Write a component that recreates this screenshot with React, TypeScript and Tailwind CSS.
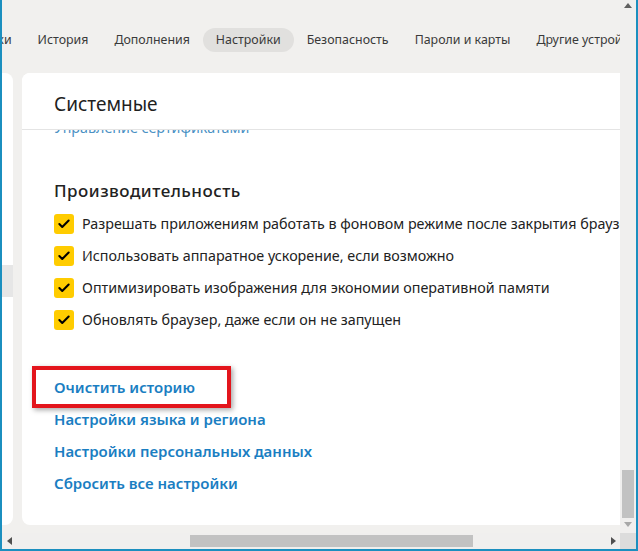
import { Check } from 'lucide-react'

const tabs = ["Закладки", "История", "Дополнения", "Настройки", "Безопасность", "Пароли и карты", "Другие устройства"]

const options = [
    "Разрешать приложениям работать в фоновом режиме после закрытия браузера",
    "Использовать аппаратное ускорение, если возможно",
    "Оптимизировать изображения для экономии оперативной памяти",
    "Обновлять браузер, даже если он не запущен",
]

const links = [
    "Очистить историю",
    "Настройки языка и региона",
    "Настройки персональных данных",
    "Сбросить все настройки",
]

export default function App() {
    return (
        <div className="w-[638px] h-[551px] flex flex-col bg-[#f1f0ee] border-x-2 border-b-2 border-[#1b8fbf] overflow-hidden font-['Noto_Sans',sans-serif]">
            <div className="flex h-[533px]">
                {/* Page area */}
                <div className="flex-1 flex flex-col min-w-0">
                    {/* Tabs */}
                    <div className="h-[73px] flex items-center overflow-hidden">
                        <div className="flex items-center -ml-[60px] pt-[6px] whitespace-nowrap">
                            {tabs.map((tab) => (
                                <div
                                    key={tab}
                                    className={`h-[24px] px-[13px] pt-[2px] flex items-center rounded-full text-[12.4px] text-[#3a3a3a] ${tab === "Настройки" ? 'bg-[#e1e0de]' : ''}`}
                                >
                                    {tab}
                                </div>
                            ))}
                        </div>
                    </div>

                    <div className="flex flex-1 pb-[8px]">
                        {/* Side menu */}
                        <div className="w-[11px] bg-white rounded-r-[8px] pt-[192px]">
                            <div className="h-[32px] bg-[#e6e6e6]" />
                        </div>

                        {/* Main card */}
                        <div className="ml-[9px] flex-1 bg-white rounded-l-[8px] flex flex-col overflow-hidden">
                            <div className="relative z-10 h-[57px] bg-white border-b border-[#e4e4e4] pl-[32px] pt-[19px]">
                                <h1 className="text-[19px] leading-[24px] text-[#1f1f1f]">Системные</h1>
                            </div>

                            <div className="pl-[32px] flex flex-col">
                                <a className="-mt-[12px] text-[14.3px] leading-[20px] text-[#4b91c4]">Управление сертификатами</a>

                                <h2 className="mt-[43px] text-[17px] leading-[20px] font-medium tracking-[0.5px] text-[#222]">Производительность</h2>

                                <div className="mt-[7px] flex flex-col">
                                    {options.map((opt) => (
                                        <div key={opt} className="h-[32px] flex items-center whitespace-nowrap">
                                            <span className="w-[20px] h-[20px] rounded-[3px] bg-[#ffcc00] flex items-center justify-center shrink-0">
                                                <Check className="w-[14px] h-[14px] text-black" strokeWidth={3.5} />
                                            </span>
                                            <span className="ml-[8px] text-[14.3px] text-[#222]">{opt}</span>
                                        </div>
                                    ))}
                                </div>

                                <div className="mt-[35px] flex flex-col">
                                    {links.map((link, i) => (
                                        <div key={link} className="h-[32px] flex items-center">
                                            <a className="relative text-[15px] font-semibold text-[#1a7ec2] whitespace-nowrap">
                                                {link}
                                                {i === 0 && (
                                                    <span className="absolute -left-[22px] -right-[36px] -top-[10px] -bottom-[10px] border-[4px] border-[#e3151c] shadow-[2px_2px_5px_rgba(0,0,0,0.35)]" />
                                                )}
                                            </a>
                                        </div>
                                    ))}
                                </div>
                            </div>
                        </div>
                    </div>
                </div>

                {/* Vertical scrollbar */}
                <div className="w-[16px] flex flex-col items-center bg-[#f0efee]">
                    <svg width="8" height="5" viewBox="0 0 8 5" className="mt-[3px]">
                        <polygon points="0,5 4,0 8,5" fill="#606060" />
                    </svg>
                    <div className="flex-1" />
                    <div className="w-[12px] h-[48px] bg-[#c2c2c2]" />
                    <svg width="8" height="5" viewBox="0 0 8 5" className="mt-[4px] mb-[6px]">
                        <polygon points="0,0 8,0 4,5" fill="#a8a8a8" />
                    </svg>
                </div>
            </div>

            {/* Horizontal scrollbar */}
            <div className="h-[16px] flex items-center">
                <div className="flex-1 flex items-center h-full bg-[#f0efee]">
                    <svg width="5" height="8" viewBox="0 0 5 8" className="ml-[5px]">
                        <polygon points="5,0 0,4 5,8" fill="#505050" />
                    </svg>
                    <div className="ml-[178px] w-[283px] h-[12px] bg-[#c2c2c2]" />
                    <div className="flex-1" />
                    <svg width="5" height="8" viewBox="0 0 5 8" className="mr-[4px]">
                        <polygon points="0,0 5,4 0,8" fill="#505050" />
                    </svg>
                </div>
                <div className="w-[16px] h-full bg-[#dcdcdc]" />
            </div>
        </div>
    )
}
